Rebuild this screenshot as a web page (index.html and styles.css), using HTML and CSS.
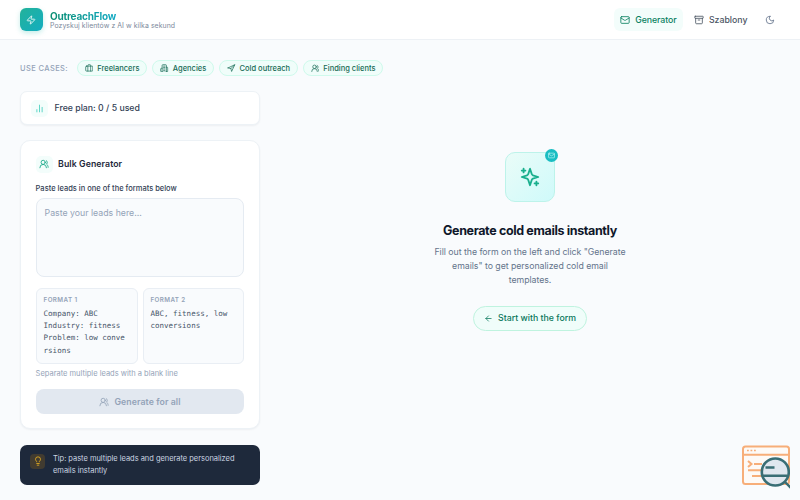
FILE: index.html
```html
<!DOCTYPE html>
<html lang="pl">
<head>
  <meta charset="UTF-8">
  <meta name="viewport" content="width=device-width, initial-scale=1.0">
  <title>OutreachFlow</title>
  <link rel="stylesheet" href="styles.css">
</head>
<body>
  <svg class="sprite" width="0" height="0">
    <symbol id="zap" viewBox="0 0 24 24"><path d="M4 14a1 1 0 0 1-.78-1.63l9.9-10.2a.5.5 0 0 1 .86.46l-1.92 6.02A1 1 0 0 0 13 10h7a1 1 0 0 1 .78 1.63l-9.9 10.2a.5.5 0 0 1-.86-.46l1.92-6.02A1 1 0 0 0 11 14z"/></symbol>
    <symbol id="mail" viewBox="0 0 24 24"><rect x="2" y="4" width="20" height="16" rx="2"/><path d="m22 7-8.97 5.7a1.94 1.94 0 0 1-2.06 0L2 7"/></symbol>
    <symbol id="archive" viewBox="0 0 24 24"><rect x="2" y="3" width="20" height="5" rx="1"/><path d="M4 8v11a2 2 0 0 0 2 2h12a2 2 0 0 0 2-2V8M10 12h4"/></symbol>
    <symbol id="moon" viewBox="0 0 24 24"><path d="M12 3a6 6 0 0 0 9 9 9 9 0 1 1-9-9Z"/></symbol>
    <symbol id="briefcase" viewBox="0 0 24 24"><rect x="2" y="6" width="20" height="14" rx="2"/><path d="M16 20V4a2 2 0 0 0-2-2h-4a2 2 0 0 0-2 2v16"/></symbol>
    <symbol id="building" viewBox="0 0 24 24"><path d="M6 22V4a2 2 0 0 1 2-2h8a2 2 0 0 1 2 2v18ZM6 12H4a2 2 0 0 0-2 2v6a2 2 0 0 0 2 2h2M18 9h2a2 2 0 0 1 2 2v9a2 2 0 0 1-2 2h-2M10 6h4M10 10h4M10 14h4M10 18h4"/></symbol>
    <symbol id="send" viewBox="0 0 24 24"><path d="m3 11 19-9-9 19-2-8-8-2zM22 2 11 13"/></symbol>
    <symbol id="users" viewBox="0 0 24 24"><path d="M18 21a8 8 0 0 0-16 0"/><circle cx="10" cy="8" r="5"/><path d="M22 20c0-3.37-2-6.5-4-8a5 5 0 0 0-.45-8.3"/></symbol>
    <symbol id="chart" viewBox="0 0 24 24"><path d="M5 21v-6M12 21V3M19 21V9"/></symbol>
    <symbol id="bulb" viewBox="0 0 24 24"><path d="M15 14c.2-1 .7-1.700 1.500-2.500 1-.9 1.500-2.200 1.500-3.500A6 6 0 0 0 6 8c0 1 .2 2.200 1.500 3.500.7.7 1.300 1.500 1.500 2.500M9 18h6M10 22h4"/></symbol>
    <symbol id="sparkles" viewBox="0 0 24 24"><path d="M12 3l-1.900 5.800a2 2 0 0 1-1.300 1.300L3 12l5.800 1.900a2 2 0 0 1 1.300 1.300L12 21l1.900-5.800a2 2 0 0 1 1.300-1.300L21 12l-5.800-1.900a2 2 0 0 1-1.300-1.300ZM5 3v4M3 5h4M19 17v4M17 19h4"/></symbol>
    <symbol id="arrow" viewBox="0 0 24 24"><path d="m12 19-7-7 7-7M19 12H5"/></symbol>
  </svg>

  <header class="header">
    <div class="brand">
      <div class="logo"><svg class="icon"><use href="#zap"/></svg></div>
      <div>
        <div class="brand-name">OutreachFlow</div>
        <div class="brand-sub">Pozyskuj klientów z AI w kilka sekund</div>
      </div>
    </div>
    <nav class="nav">
      <a class="nav-link active"><svg class="icon"><use href="#mail"/></svg>Generator</a>
      <a class="nav-link"><svg class="icon"><use href="#archive"/></svg>Szablony</a>
      <a class="theme"><svg class="icon"><use href="#moon"/></svg></a>
    </nav>
  </header>

  <div class="use-cases">
    <span class="use-label">USE CASES:</span>
    <span class="chip"><svg class="icon"><use href="#briefcase"/></svg>Freelancers</span>
    <span class="chip"><svg class="icon"><use href="#building"/></svg>Agencies</span>
    <span class="chip"><svg class="icon"><use href="#send"/></svg>Cold outreach</span>
    <span class="chip"><svg class="icon"><use href="#users"/></svg>Finding clients</span>
  </div>

  <main class="layout">
    <aside class="sidebar">
      <div class="card plan">
        <span class="icon-box"><svg class="icon"><use href="#chart"/></svg></span>
        Free plan: 0 / 5 used
      </div>

      <section class="card bulk">
        <h2><span class="icon-box"><svg class="icon"><use href="#users"/></svg></span>Bulk Generator</h2>
        <label for="leads">Paste leads in one of the formats below</label>
        <textarea id="leads" placeholder="Paste your leads here..."></textarea>
        <div class="formats">
          <div class="format">
            <h3>FORMAT 1</h3>
            <pre>Company: ABC
Industry: fitness
Problem: low conversions</pre>
          </div>
          <div class="format">
            <h3>FORMAT 2</h3>
            <p>ABC, fitness, low conversions</p>
          </div>
        </div>
        <p class="hint">Separate multiple leads with a blank line</p>
        <button class="generate" disabled><svg class="icon"><use href="#users"/></svg>Generate for all</button>
      </section>

      <div class="tip">
        <span class="tip-icon"><svg class="icon"><use href="#bulb"/></svg></span>
        <p>Tip: paste multiple leads and generate personalized emails instantly</p>
      </div>
    </aside>

    <section class="empty">
      <div class="hero-icon">
        <svg class="icon"><use href="#sparkles"/></svg>
        <span class="hero-badge"><svg class="icon"><use href="#mail"/></svg></span>
      </div>
      <h1>Generate cold emails instantly</h1>
      <p>Fill out the form on the left and click "Generate emails" to get personalized cold email templates.</p>
      <a class="start"><svg class="icon"><use href="#arrow"/></svg>Start with the form</a>
    </section>
  </main>

  <svg class="watermark" viewBox="0 0 48 44">
    <g fill="none" stroke="#f7ae79" stroke-width="2">
      <rect x="1" y="1.500" width="46" height="37.500" rx="2.500" fill="#fdfaf7"/>
      <path d="M1 9.800h46"/>
      <path d="M5 5.600h1.800M8.500 5.600h1.800M12 5.600h1.800" stroke-width="1.500"/>
      <path d="m6 16 3.500 3L6 22M12 19h8M6 25.300h13M10 31h10"/>
    </g>
    <circle cx="33.300" cy="27" r="13.500" fill="#dfe7ef" stroke="#396e75" stroke-width="2.600"/>
    <path d="M23.500 22.500h9M21 30.800h24M42.500 36.500l7 7" fill="none" stroke="#396e75" stroke-width="2.400"/>
  </svg>
</body>
</html>
```
FILE: styles.css
```css
* {
  box-sizing: border-box;
}
body {
  margin: 0;
  height: 500px;
  overflow: hidden;
  position: relative;
  font-family: Inter, "Liberation Sans", sans-serif;
  background: #f9fbfd;
  color: #334155;
}
h1, h2, h3, p, pre {
  margin: 0;
}
.sprite {
  display: none;
}
.icon {
  width: 10px;
  height: 10px;
  flex-shrink: 0;
  fill: none;
  stroke: currentColor;
  stroke-width: 2;
  stroke-linecap: round;
  stroke-linejoin: round;
}

.header {
  height: 40px;
  padding: 0 20px;
  display: flex;
  align-items: center;
  justify-content: space-between;
  background: #fff;
  border-bottom: 1px solid #edf1f5;
}
.brand {
  display: flex;
  align-items: center;
  gap: 7.5px;
}
.logo {
  width: 22.5px;
  height: 22.5px;
  border-radius: 6px;
  display: flex;
  align-items: center;
  justify-content: center;
  color: #fff;
  background: linear-gradient(135deg, #23b29a, #13adc0);
  box-shadow: 0 2px 5px rgba(20, 184, 166, 0.25);
}
.brand-name {
  width: max-content;
  font-size: 10px;
  line-height: 10px;
  font-weight: 700;
  letter-spacing: -0.2px;
  background: linear-gradient(90deg, #0b8d70, #10a9c4);
  background-clip: text;
  -webkit-background-clip: text;
  color: transparent;
}
.brand-sub {
  margin-top: 1px;
  font-size: 6.9px;
  line-height: 7px;
  letter-spacing: 0.07px;
  color: #7c899b;
}
.nav {
  display: flex;
  align-items: center;
  gap: 3px;
}
.nav-link {
  height: 23px;
  padding: 0 7.5px;
  display: flex;
  align-items: center;
  gap: 5px;
  border-radius: 6px;
  font-size: 8.75px;
  font-weight: 500;
  color: #4b5563;
}
.nav-link.active {
  padding: 0 7px 0 6px;
  letter-spacing: -0.1px;
  color: #087f5f;
  background: #f3fdfb;
}
.theme {
  display: flex;
  padding: 5px;
  margin-left: 2px;
  color: #64748b;
}

.use-cases {
  height: 16px;
  margin: 20px 20px 0;
  display: flex;
  align-items: center;
  gap: 4.8px;
}
.use-label {
  margin-right: 4px;
  font-size: 7.5px;
  font-weight: 500;
  letter-spacing: 0.4px;
  color: #94a3b8;
}
.chip {
  height: 16px;
  padding: 0 7px;
  display: flex;
  align-items: center;
  gap: 4px;
  border: 1px solid #cffaec;
  border-radius: 8px;
  background: #f0fdfa;
  font-size: 7.5px;
  font-weight: 500;
  color: #176b56;
}
.chip .icon {
  width: 8.5px;
  height: 8.5px;
}

.layout {
  display: grid;
  grid-template-columns: 240px 1fr;
  gap: 20px;
  margin: 15px 20px 0 20px;
}
.card {
  background: #fff;
  border: 1px solid #edf2f6;
  box-shadow: 0 1px 2px rgba(15, 23, 42, 0.05);
}
.icon-box {
  width: 17px;
  height: 17px;
  display: flex;
  align-items: center;
  justify-content: center;
  border-radius: 5px;
  background: #f3fdfb;
  color: #0ea582;
}
.plan {
  height: 34px;
  padding: 0 10px;
  display: flex;
  align-items: center;
  gap: 6.5px;
  border-radius: 7px;
  font-size: 8.75px;
  font-weight: 500;
}
.plan .icon {
  width: 9px;
  height: 9px;
  color: #2dc9b5;
}
.bulk {
  height: 289px;
  margin-top: 15px;
  padding: 14.5px 14.6px 0;
  border-radius: 10px;
}
.bulk h2 {
  display: flex;
  align-items: center;
  gap: 5.5px;
  font-size: 8.75px;
  font-weight: 600;
  letter-spacing: 0.07px;
  color: #1e293b;
}
.bulk label {
  display: block;
  margin-top: 10.5px;
  font-size: 7.5px;
  line-height: 11px;
  font-weight: 500;
}
.bulk textarea {
  display: block;
  width: 100%;
  height: 79px;
  margin-top: 4px;
  padding: 7px 8px;
  resize: none;
  border: 1px solid #e5ebf2;
  border-radius: 8px;
  background: #f9fbfd;
  font: 8.75px/14px Inter, sans-serif;
}
.bulk textarea::placeholder {
  color: #94a3b8;
}
.formats {
  display: grid;
  grid-template-columns: 1fr 1fr;
  gap: 5px;
  margin-top: 11px;
}
.format {
  height: 76px;
  padding: 7px 9px 7px 7px;
  border: 1px solid #e9eef4;
  border-radius: 6px;
  background: #f9fbfd;
}
.format h3 {
  margin-bottom: 3px;
  font-size: 6.25px;
  line-height: 9px;
  font-weight: 600;
  letter-spacing: 0.4px;
  color: #94a3b8;
}
.format pre, .format p {
  font: 7.5px/12.2px "DejaVu Sans Mono", monospace;
  color: #475569;
}
.format pre {
  white-space: pre-wrap;
  word-break: break-all;
}
.hint {
  margin-top: 5px;
  font-size: 7.5px;
  line-height: 10px;
  color: #94a3b8;
}
.generate {
  width: 100%;
  height: 25px;
  margin-top: 10px;
  display: flex;
  align-items: center;
  justify-content: center;
  gap: 5px;
  border: 0;
  border-radius: 8px;
  background: #e2e8f0;
  font: 600 8.75px Inter, sans-serif;
  letter-spacing: 0.08px;
  color: #94a3b8;
}
.tip {
  height: 40px;
  margin-top: 15.5px;
  padding: 8px 10px;
  display: flex;
  gap: 8px;
  border-radius: 7px;
  background: #1e293b;
}
.tip-icon {
  width: 15px;
  height: 15px;
  margin-top: 1px;
  display: flex;
  flex-shrink: 0;
  align-items: center;
  justify-content: center;
  border-radius: 4px;
  background: #413b30;
  color: #e8b021;
}
.tip p {
  font-size: 7.5px;
  line-height: 12.2px;
  letter-spacing: -0.03px;
  color: #cbd5e1;
}

.empty {
  padding-top: 61px;
  display: flex;
  flex-direction: column;
  align-items: center;
  text-align: center;
}
.hero-icon {
  width: 50px;
  height: 50px;
  position: relative;
  display: flex;
  align-items: center;
  justify-content: center;
  border: 1px solid #bdf3ea;
  border-radius: 10px;
  background: linear-gradient(135deg, #eafcf8, #cffafa);
  color: #19af8d;
}
.hero-icon > .icon {
  width: 22px;
  height: 22px;
}
.hero-badge {
  position: absolute;
  top: -4px;
  right: -4px;
  width: 13px;
  height: 13px;
  display: flex;
  align-items: center;
  justify-content: center;
  border-radius: 50%;
  background: #1abdc2;
  color: #d8ffff;
}
.hero-badge .icon {
  width: 7px;
  height: 7px;
}
.empty h1 {
  margin-top: 20px;
  font-size: 12.5px;
  line-height: 17px;
  font-weight: 700;
  letter-spacing: -0.36px;
  color: #0f172a;
}
.empty p {
  width: 200px;
  margin-top: 5.5px;
  font-size: 8.75px;
  line-height: 14.2px;
  letter-spacing: -0.03px;
  color: #64748b;
}
.start {
  height: 25px;
  margin-top: 18.5px;
  padding: 0 10px;
  display: flex;
  align-items: center;
  gap: 5px;
  border: 1px solid #bff3df;
  border-radius: 13px;
  background: #f0fdfa;
  font-size: 8.75px;
  font-weight: 500;
  color: #08775b;
}
.start .icon {
  width: 9px;
  height: 9px;
}
.watermark {
  position: absolute;
  left: 742px;
  top: 445px;
  width: 48px;
  height: 44px;
}
```
